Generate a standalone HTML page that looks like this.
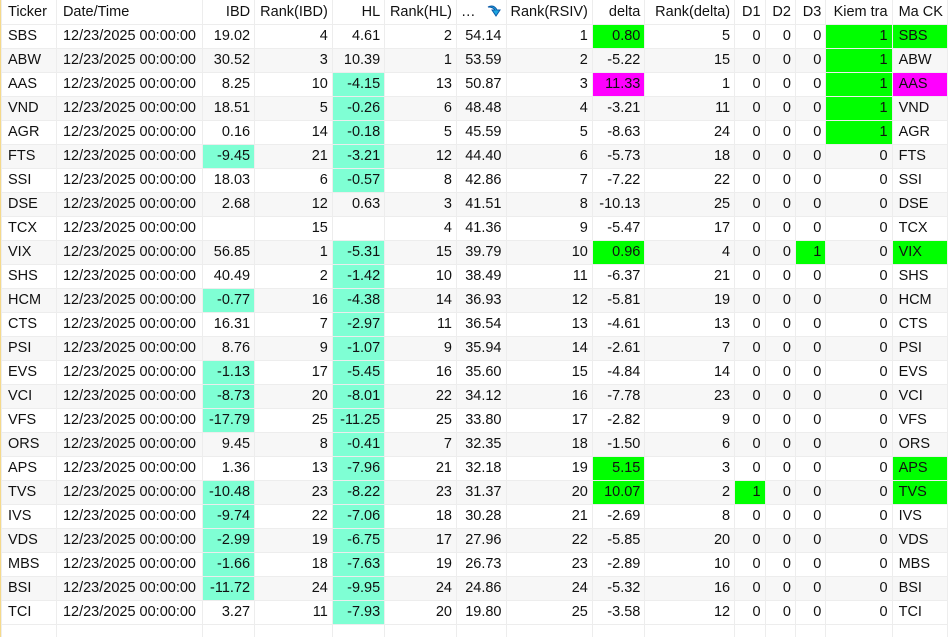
<!DOCTYPE html>
<html><head><meta charset="utf-8"><style>
html,body{margin:0;padding:0;background:#fff;width:948px;height:637px;overflow:hidden}
body{border-left:1px solid #f5d98a;box-sizing:border-box}
table{border-collapse:collapse;table-layout:fixed;font-family:"Liberation Sans",sans-serif;font-size:14.5px;color:#111}
td{height:24px;padding:0 4px;border:1px solid #ededed;white-space:nowrap;overflow:hidden;text-align:right;box-sizing:border-box}
tr:first-child td{border-top:none}
td.l{text-align:left;padding-left:6px}
tr.g td{background:#f7f7f7}
td.a{background:#7fffd4!important}
td.G{background:#00ff00!important}
td.M{background:#ff00ff!important}
tr.e td{height:13px}
</style></head><body>
<table>
<colgroup><col style="width:56px"><col style="width:146px"><col style="width:53px"><col style="width:78px"><col style="width:53px"><col style="width:72px"><col style="width:46px"><col style="width:84px"><col style="width:53px"><col style="width:91px"><col style="width:31px"><col style="width:31px"><col style="width:31px"><col style="width:67px"><col style="width:55px"></colgroup>
<tr><td class="l">Ticker</td><td class="l">Date/Time</td><td>IBD</td><td>Rank(IBD)</td><td>HL</td><td>Rank(HL)</td><td class="l" style="padding-left:4px">…<svg width="16" height="16" viewBox="0 0 16 16" style="vertical-align:-3px;margin-left:10px"><path d="M2 4 Q8 1 11 7 L14 7 L10 13 L6 7 L9 7 Q7 4 2 4Z" fill="#1ea7e0" stroke="#0a5aa8" stroke-width="1"/></svg></td><td>Rank(RSIV)</td><td>delta</td><td>Rank(delta)</td><td>D1</td><td>D2</td><td>D3</td><td>Kiem tra</td><td class="l">Ma CK</td></tr>
<tr><td class="l">SBS</td><td class="l">12/23/2025 00:00:00</td><td>19.02</td><td>4</td><td>4.61</td><td>2</td><td>54.14</td><td>1</td><td class="G">0.80</td><td>5</td><td>0</td><td>0</td><td>0</td><td class="G">1</td><td class="l G">SBS</td></tr>
<tr class="g"><td class="l">ABW</td><td class="l">12/23/2025 00:00:00</td><td>30.52</td><td>3</td><td>10.39</td><td>1</td><td>53.59</td><td>2</td><td>-5.22</td><td>15</td><td>0</td><td>0</td><td>0</td><td class="G">1</td><td class="l">ABW</td></tr>
<tr><td class="l">AAS</td><td class="l">12/23/2025 00:00:00</td><td>8.25</td><td>10</td><td class="a">-4.15</td><td>13</td><td>50.87</td><td>3</td><td class="M">11.33</td><td>1</td><td>0</td><td>0</td><td>0</td><td class="G">1</td><td class="l M">AAS</td></tr>
<tr class="g"><td class="l">VND</td><td class="l">12/23/2025 00:00:00</td><td>18.51</td><td>5</td><td class="a">-0.26</td><td>6</td><td>48.48</td><td>4</td><td>-3.21</td><td>11</td><td>0</td><td>0</td><td>0</td><td class="G">1</td><td class="l">VND</td></tr>
<tr><td class="l">AGR</td><td class="l">12/23/2025 00:00:00</td><td>0.16</td><td>14</td><td class="a">-0.18</td><td>5</td><td>45.59</td><td>5</td><td>-8.63</td><td>24</td><td>0</td><td>0</td><td>0</td><td class="G">1</td><td class="l">AGR</td></tr>
<tr class="g"><td class="l">FTS</td><td class="l">12/23/2025 00:00:00</td><td class="a">-9.45</td><td>21</td><td class="a">-3.21</td><td>12</td><td>44.40</td><td>6</td><td>-5.73</td><td>18</td><td>0</td><td>0</td><td>0</td><td>0</td><td class="l">FTS</td></tr>
<tr><td class="l">SSI</td><td class="l">12/23/2025 00:00:00</td><td>18.03</td><td>6</td><td class="a">-0.57</td><td>8</td><td>42.86</td><td>7</td><td>-7.22</td><td>22</td><td>0</td><td>0</td><td>0</td><td>0</td><td class="l">SSI</td></tr>
<tr class="g"><td class="l">DSE</td><td class="l">12/23/2025 00:00:00</td><td>2.68</td><td>12</td><td>0.63</td><td>3</td><td>41.51</td><td>8</td><td>-10.13</td><td>25</td><td>0</td><td>0</td><td>0</td><td>0</td><td class="l">DSE</td></tr>
<tr><td class="l">TCX</td><td class="l">12/23/2025 00:00:00</td><td></td><td>15</td><td></td><td>4</td><td>41.36</td><td>9</td><td>-5.47</td><td>17</td><td>0</td><td>0</td><td>0</td><td>0</td><td class="l">TCX</td></tr>
<tr class="g"><td class="l">VIX</td><td class="l">12/23/2025 00:00:00</td><td>56.85</td><td>1</td><td class="a">-5.31</td><td>15</td><td>39.79</td><td>10</td><td class="G">0.96</td><td>4</td><td>0</td><td>0</td><td class="G">1</td><td>0</td><td class="l G">VIX</td></tr>
<tr><td class="l">SHS</td><td class="l">12/23/2025 00:00:00</td><td>40.49</td><td>2</td><td class="a">-1.42</td><td>10</td><td>38.49</td><td>11</td><td>-6.37</td><td>21</td><td>0</td><td>0</td><td>0</td><td>0</td><td class="l">SHS</td></tr>
<tr class="g"><td class="l">HCM</td><td class="l">12/23/2025 00:00:00</td><td class="a">-0.77</td><td>16</td><td class="a">-4.38</td><td>14</td><td>36.93</td><td>12</td><td>-5.81</td><td>19</td><td>0</td><td>0</td><td>0</td><td>0</td><td class="l">HCM</td></tr>
<tr><td class="l">CTS</td><td class="l">12/23/2025 00:00:00</td><td>16.31</td><td>7</td><td class="a">-2.97</td><td>11</td><td>36.54</td><td>13</td><td>-4.61</td><td>13</td><td>0</td><td>0</td><td>0</td><td>0</td><td class="l">CTS</td></tr>
<tr class="g"><td class="l">PSI</td><td class="l">12/23/2025 00:00:00</td><td>8.76</td><td>9</td><td class="a">-1.07</td><td>9</td><td>35.94</td><td>14</td><td>-2.61</td><td>7</td><td>0</td><td>0</td><td>0</td><td>0</td><td class="l">PSI</td></tr>
<tr><td class="l">EVS</td><td class="l">12/23/2025 00:00:00</td><td class="a">-1.13</td><td>17</td><td class="a">-5.45</td><td>16</td><td>35.60</td><td>15</td><td>-4.84</td><td>14</td><td>0</td><td>0</td><td>0</td><td>0</td><td class="l">EVS</td></tr>
<tr class="g"><td class="l">VCI</td><td class="l">12/23/2025 00:00:00</td><td class="a">-8.73</td><td>20</td><td class="a">-8.01</td><td>22</td><td>34.12</td><td>16</td><td>-7.78</td><td>23</td><td>0</td><td>0</td><td>0</td><td>0</td><td class="l">VCI</td></tr>
<tr><td class="l">VFS</td><td class="l">12/23/2025 00:00:00</td><td class="a">-17.79</td><td>25</td><td class="a">-11.25</td><td>25</td><td>33.80</td><td>17</td><td>-2.82</td><td>9</td><td>0</td><td>0</td><td>0</td><td>0</td><td class="l">VFS</td></tr>
<tr class="g"><td class="l">ORS</td><td class="l">12/23/2025 00:00:00</td><td>9.45</td><td>8</td><td class="a">-0.41</td><td>7</td><td>32.35</td><td>18</td><td>-1.50</td><td>6</td><td>0</td><td>0</td><td>0</td><td>0</td><td class="l">ORS</td></tr>
<tr><td class="l">APS</td><td class="l">12/23/2025 00:00:00</td><td>1.36</td><td>13</td><td class="a">-7.96</td><td>21</td><td>32.18</td><td>19</td><td class="G">5.15</td><td>3</td><td>0</td><td>0</td><td>0</td><td>0</td><td class="l G">APS</td></tr>
<tr class="g"><td class="l">TVS</td><td class="l">12/23/2025 00:00:00</td><td class="a">-10.48</td><td>23</td><td class="a">-8.22</td><td>23</td><td>31.37</td><td>20</td><td class="G">10.07</td><td>2</td><td class="G">1</td><td>0</td><td>0</td><td>0</td><td class="l G">TVS</td></tr>
<tr><td class="l">IVS</td><td class="l">12/23/2025 00:00:00</td><td class="a">-9.74</td><td>22</td><td class="a">-7.06</td><td>18</td><td>30.28</td><td>21</td><td>-2.69</td><td>8</td><td>0</td><td>0</td><td>0</td><td>0</td><td class="l">IVS</td></tr>
<tr class="g"><td class="l">VDS</td><td class="l">12/23/2025 00:00:00</td><td class="a">-2.99</td><td>19</td><td class="a">-6.75</td><td>17</td><td>27.96</td><td>22</td><td>-5.85</td><td>20</td><td>0</td><td>0</td><td>0</td><td>0</td><td class="l">VDS</td></tr>
<tr><td class="l">MBS</td><td class="l">12/23/2025 00:00:00</td><td class="a">-1.66</td><td>18</td><td class="a">-7.63</td><td>19</td><td>26.73</td><td>23</td><td>-2.89</td><td>10</td><td>0</td><td>0</td><td>0</td><td>0</td><td class="l">MBS</td></tr>
<tr class="g"><td class="l">BSI</td><td class="l">12/23/2025 00:00:00</td><td class="a">-11.72</td><td>24</td><td class="a">-9.95</td><td>24</td><td>24.86</td><td>24</td><td>-5.32</td><td>16</td><td>0</td><td>0</td><td>0</td><td>0</td><td class="l">BSI</td></tr>
<tr><td class="l">TCI</td><td class="l">12/23/2025 00:00:00</td><td>3.27</td><td>11</td><td class="a">-7.93</td><td>20</td><td>19.80</td><td>25</td><td>-3.58</td><td>12</td><td>0</td><td>0</td><td>0</td><td>0</td><td class="l">TCI</td></tr>
<tr class="e"><td></td><td></td><td></td><td></td><td></td><td></td><td></td><td></td><td></td><td></td><td></td><td></td><td></td><td></td><td></td></tr>
</table>
</body></html>
